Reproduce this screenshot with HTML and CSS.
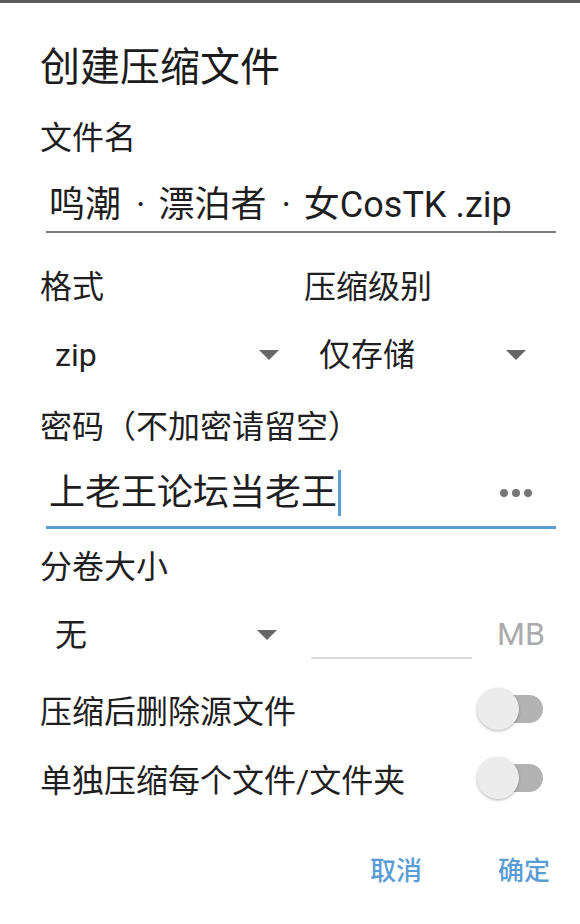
FILE: index.html
```html
<!DOCTYPE html>
<html lang="zh-CN">
<head>
    <meta charset="UTF-8">
    <meta name="viewport" content="width=device-width, initial-scale=1.0">
    <title>创建压缩文件</title>
    <link rel="stylesheet" href="styles.css">
</head>
<body>
    <!-- Status strip at the very top -->
    <div class="top-strip"></div>

    <div class="dialog">
        <h1 class="title">创建压缩文件</h1>

        <!-- File name -->
        <div class="label">文件名</div>
        <div class="field field-name">
            <span class="field-text">鸣潮<span class="sep">·</span>漂泊者<span class="sep">·</span>女CosTK .zip</span>
        </div>

        <!-- Format and level -->
        <div class="two-col">
            <div class="col">
                <div class="label">格式</div>
                <div class="spinner">
                    <span>zip</span>
                    <i class="arrow"></i>
                </div>
            </div>
            <div class="col">
                <div class="label">压缩级别</div>
                <div class="spinner">
                    <span>仅存储</span>
                    <i class="arrow"></i>
                </div>
            </div>
        </div>

        <!-- Password -->
        <div class="label label-pass">密码（不加密请留空）</div>
        <div class="field field-pass">
            <span class="field-text">上老王论坛当老王</span><span class="cursor"></span>
            <span class="dots"><i></i><i></i><i></i></span>
        </div>

        <!-- Volume size -->
        <div class="label label-vol">分卷大小</div>
        <div class="vol-row">
            <div class="spinner spinner-vol">
                <span>无</span>
                <i class="arrow"></i>
            </div>
            <div class="mb-input"></div>
            <span class="mb">MB</span>
        </div>

        <!-- Switches -->
        <div class="switch-row first">
            <span>压缩后删除源文件</span>
            <div class="switch"><div class="knob"></div></div>
        </div>
        <div class="switch-row">
            <span>单独压缩每个文件/文件夹</span>
            <div class="switch"><div class="knob"></div></div>
        </div>

        <!-- Actions -->
        <div class="actions">
            <button class="btn">取消</button>
            <button class="btn">确定</button>
        </div>
    </div>
</body>
</html>
```

FILE: styles.css
```css
/* Base */
body {
    margin: 0;
    background: #fff;
    color: #1f1f1f;
    font-family: Roboto, "Noto Sans CJK SC", sans-serif;
}

.top-strip {
    height: 3px;
    background: #5c5c5c;
}

/* Dialog */
.dialog {
    padding: 0 24px 0 40px;
}

.title {
    margin: 37px 0 0;
    font-size: 40px;
    font-weight: 400;
    line-height: 56px;
    color: #1c1c1c;
}

.label {
    font-size: 32px;
    line-height: 40px;
    margin-top: 22px;
}

/* Text fields */
.field {
    display: flex;
    align-items: center;
    margin-left: 6px;
    padding-left: 3px;
    font-size: 36px;
    line-height: 44px;
}

.field-name {
    padding-top: 25px;
    padding-bottom: 4px;
    border-bottom: 2px solid #7c7c7c;
}

.sep {
    margin: 0 13px 0 15px;
}

.field-pass {
    padding-top: 23px;
    padding-bottom: 10px;
    border-bottom: 3px solid #5e9fd3;
}

.cursor {
    width: 3px;
    height: 46px;
    margin-left: 1px;
    background: #5e9fd3;
}

.dots {
    display: flex;
    gap: 4px;
    margin-left: auto;
    margin-right: 24px;
}

.dots i {
    width: 8px;
    height: 8px;
    border-radius: 50%;
    background: #777;
}

/* Spinners */
.two-col {
    display: flex;
    margin-top: 12px;
}

.col {
    flex: 0 0 264px;
}

.col + .col {
    flex: 1;
}

.spinner {
    display: flex;
    align-items: center;
    justify-content: space-between;
    margin-top: 26px;
    padding: 0 25px 0 15px;
    font-size: 32px;
    line-height: 44px;
}

.col + .col .spinner {
    padding-right: 30px;
}

.arrow {
    width: 0;
    height: 0;
    border-left: 10px solid transparent;
    border-right: 10px solid transparent;
    border-top: 10px solid #666;
}

.label-pass {
    margin-top: 30px;
}

.label-vol {
    margin-top: 18px;
}

/* Volume size row */
.vol-row {
    display: flex;
    align-items: center;
    margin-top: 24px;
    height: 48px;
}

.spinner-vol {
    margin-top: 0;
    width: 222px;
}

.mb-input {
    width: 161px;
    height: 46px;
    margin-left: 9px;
    border-bottom: 2px solid #dcdcdc;
    align-self: flex-start;
}

.mb {
    margin-left: 25px;
    margin-top: -3px;
    font-size: 32px;
    color: #ababab;
}

/* Switch rows */
.switch-row {
    display: flex;
    align-items: center;
    justify-content: space-between;
    height: 56px;
    margin-top: 13px;
    font-size: 32px;
}

.switch-row.first {
    margin-top: 22px;
}

.switch {
    position: relative;
    width: 60px;
    height: 28px;
    margin-right: 13px;
    border-radius: 14px;
    background: #b3b3b3;
}

.knob {
    position: absolute;
    left: -6px;
    top: -7px;
    width: 42px;
    height: 42px;
    border-radius: 50%;
    background: #ececec;
    box-shadow: 0 1px 3px rgba(0, 0, 0, 0.3);
}

/* Buttons */
.actions {
    display: flex;
    justify-content: flex-end;
    gap: 76px;
    margin-top: 43px;
    padding-right: 6px;
}

.btn {
    padding: 0;
    border: none;
    background: none;
    font-family: Roboto, "Noto Sans CJK SC", sans-serif;
    font-size: 26px;
    font-weight: 500;
    line-height: 44px;
    color: #5a9dd5;
}
```
